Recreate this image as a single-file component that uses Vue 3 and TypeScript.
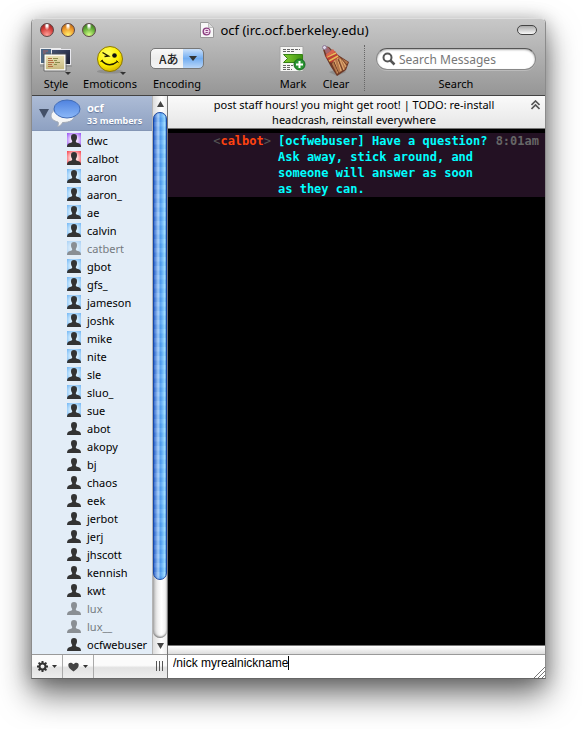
<script setup lang="ts">
import { ref } from 'vue'

type Badge = 'owner' | 'admin' | 'voice' | 'none'
interface Member {
  name: string
  badge: Badge
  away?: boolean
}

const make = (names: string, badge: Badge): Member[] =>
  names.split(' ').map((name) => ({ name, badge, away: ['catbert', 'lux', 'lux__'].includes(name) }))

const members: Member[] = [
  ...make('dwc', 'owner'),
  ...make('calbot', 'admin'),
  ...make('aaron aaron_ ae calvin catbert gbot gfs_ jameson joshk mike nite sle sluo_ sue', 'voice'),
  ...make('abot akopy bj chaos eek jerbot jerj jhscott kennish kwt lux lux__ ocfwebuser', 'none'),
]

const draft = ref('/nick myrealnickname')
const search = ref('')
const encoding = ref('ja')
const teeth = [0, 45, 90, 135, 180, 225, 270, 315]
</script>

<template>
  <div class="desktop">
    <div class="window">
      <header class="chrome">
        <div class="titlebar">
          <div class="lights">
            <button class="light red" aria-label="Close"></button>
            <button class="light amber" aria-label="Minimize"></button>
            <button class="light green" aria-label="Zoom"></button>
          </div>
          <h1 class="title">
            <svg width="14" height="16" viewBox="0 0 14 16">
              <path d="M.5.5h8l5 5v10H.5z" fill="#f7f7f7" stroke="#999" />
              <path d="M8.500.5v5h5z" fill="#ddd" stroke="#aaa" stroke-width=".7" />
              <circle cx="6.500" cy="9.500" r="4" fill="#8b3f80" />
              <path d="M4 9.500h5c0-3-4.500-3-4.500 0 0 2.500 3 2.500 4.500 1" fill="none" stroke="#f4dff0" stroke-width="1.200" />
            </svg>
            <span>ocf (irc.ocf.berkeley.edu)</span>
          </h1>
          <button class="pill" aria-label="Toggle toolbar"></button>
        </div>
        <div class="toolbar">
          <button class="tool style">
            <svg width="34" height="30" viewBox="0 0 34 30">
              <defs>
                <linearGradient id="navy" x2="1" y2="1"><stop stop-color="#465374" /><stop offset="1" stop-color="#191b2d" /></linearGradient>
                <linearGradient id="sand" x2="0" y2="1"><stop stop-color="#ede3b9" /><stop offset="1" stop-color="#c6b77c" /></linearGradient>
              </defs>
              <rect x="1.500" y="3.500" width="20" height="15" fill="#4e6886" stroke="#eee" />
              <path d="M4 6h5M4 8h3" stroke="#a55e60" />
              <rect x="12.500" y="4.500" width="19" height="15" fill="url(#navy)" stroke="#e8e8ee" />
              <path d="M1 21h32" stroke="#777" opacity=".6" />
              <rect x="6" y="10" width="20" height="15" fill="url(#sand)" stroke="#fff" stroke-width="1.500" />
              <path d="M5 9h22v17H5z" fill="none" stroke="#555" stroke-width=".7" />
              <path d="M9 13.500h4M9 15.500h5M9 17.500h6M9 19.500h4M9 21.500h5" stroke="#b46e44" />
              <path d="M14 13.500h5M15 15.500h3M16 17.500h5M15 19.500h3" stroke="#8b8d4d" />
              <path d="M26 27h6l-3 3z" fill="#333" />
            </svg>
            <span>Style</span>
          </button>
          <button class="tool emoticons">
            <svg width="34" height="30" viewBox="0 0 34 30">
              <defs>
                <radialGradient id="smile" cx=".4" cy=".3" r=".75"><stop stop-color="#ffff65" /><stop offset=".6" stop-color="#fff000" /><stop offset="1" stop-color="#d2ad00" /></radialGradient>
              </defs>
              <ellipse cx="17" cy="26.500" rx="13" ry="2" fill="#666" opacity=".35" />
              <circle cx="17" cy="14" r="12.500" fill="url(#smile)" stroke="#8b7700" />
              <path d="M9.500 7.500l6 3.500-4 .5" fill="none" stroke="#221b00" stroke-width="1.400" />
              <circle cx="21.500" cy="10.500" r="2.300" fill="#111" />
              <path d="M8.500 15.500q7.500 8 16 1" fill="none" stroke="#221b00" stroke-width="1.600" />
              <path d="M7.500 16.500l2.500-1.500M23.500 15.500l2 2" stroke="#221b00" />
              <path d="M27 27h6l-3 3z" fill="#333" />
            </svg>
            <span>Emoticons</span>
          </button>
          <div class="tool encoding">
            <div class="select-wrap">
              <select id="encoding" v-model="encoding">
                <option value="ja">Aあ</option>
              </select>
              <svg class="select-arrow" width="8" height="5" viewBox="0 0 8 5"><path d="M0 0h8L4 5z" fill="#333" /></svg>
            </div>
            <label for="encoding">Encoding</label>
          </div>
          <button class="tool mark">
            <svg width="28" height="30" viewBox="0 0 28 30">
              <defs>
                <linearGradient id="leaf" x2="1"><stop stop-color="#83cf31" /><stop offset="1" stop-color="#3d9210" /></linearGradient>
              </defs>
              <path d="M1 1.500h23v25H1z" fill="#f6f6f4" stroke="#a5a5a5" />
              <path d="M4 4.500h17M4 6.500h12M4 20.500h10M4 22.500h8M4 24.500h9" stroke="#666" stroke-dasharray="3 1" />
              <path d="M4.500 9.500h19v8h-19l4-4z" fill="url(#leaf)" stroke="#348114" />
              <circle cx="20.500" cy="19.500" r="5.500" fill="#299633" stroke="#17651f" />
              <path d="M20.500 16v7M17 19.500h7" stroke="#fff" stroke-width="2" />
            </svg>
            <span>Mark</span>
          </button>
          <button class="tool clear">
            <svg width="32" height="32" viewBox="0 0 32 32">
              <path d="M9 27l8 4 9-4-5-4z" fill="#555" opacity=".3" />
              <path d="M3 4.500L5 1l4 1 4 4 5 4 11 7-3 8-9 6-6-9-6-11z" fill="#6d3826" />
              <path d="M16 10l12 7-3 7-8 5-5-10z" fill="#b5774a" />
              <path d="M14 13l4 15M17 12l4 14M20 14l4 11M22 15l4 7" stroke="#e3ae76" />
              <path d="M14 17l5 12M18 14l5 12M20 12l7 8" stroke="#713d27" />
              <path d="M5 11l10-5 4 6-8 6z" fill="#bd4034" />
              <path d="M7 12l9-4M9 16l9-5" stroke="#e5be59" stroke-width="1.500" />
              <path d="M6 9l7-5 2 3-8 5z" fill="#d9644c" />
              <path d="M4 3l4-1 3 4-5 3z" fill="#a46770" />
              <circle cx="4.500" cy="2.500" r="2" fill="#ded9eb" stroke="#8d7893" />
            </svg>
            <span>Clear</span>
          </button>
          <span class="divider"></span>
          <div class="tool search">
            <div class="field">
              <svg width="14" height="14" viewBox="0 0 14 14"><circle cx="5.500" cy="5.500" r="4" fill="none" stroke="#555" stroke-width="2" /><path d="M8.500 8.500l4 4" stroke="#555" stroke-width="2.500" /></svg>
              <input id="search" v-model="search" type="text" placeholder="Search Messages" />
            </div>
            <label for="search">Search</label>
          </div>
        </div>
      </header>

      <div class="body">
        <aside class="sidebar">
          <div class="roster">
            <div class="list">
              <button class="room">
                <svg class="disclosure" width="10" height="9" viewBox="0 0 10 9"><path d="M0 0h10L5 9z" fill="#435068" /></svg>
                <svg width="31" height="28" viewBox="0 0 31 28">
                  <defs>
                    <linearGradient id="bubble" x2="0" y2="1"><stop stop-color="#4f82df" /><stop offset="1" stop-color="#8bb8f8" /></linearGradient>
                  </defs>
                  <path d="M11 10C4 10 1 13.500 1 17c0 3 3 5 7 6 1 2 0 3-.5 4.500 3-.5 4-2 5-4C20 23.500 24 21 24 17s-5-7-13-7z" fill="#f4f5f6" stroke="#a1a8b4" />
                  <ellipse cx="17" cy="10" rx="13" ry="9" fill="url(#bubble)" stroke="#416cb7" />
                </svg>
                <span class="room-text"><b>ocf</b><small>33 members</small></span>
              </button>
              <ul>
                <li v-for="m in members" :key="m.name" :class="{ away: m.away }">
                  <span class="avatar" :class="m.badge">
                    <svg width="14" height="14" viewBox="0 0 14 14">
                      <path d="M7 1c2 0 3 1.200 3 3.200C10 6 9.300 7 8.800 8c0 1 .4 1.600 2.200 2 2 .5 3 1.500 3 4H0c0-2.500 1-3.500 3-4 1.800-.4 2.200-1 2.200-2C4.700 7 4 6 4 4.200 4 2.200 5 1 7 1z" fill="#333" />
                    </svg>
                  </span>
                  <span>{{ m.name }}</span>
                </li>
              </ul>
            </div>
            <div class="scrollbar">
              <button aria-label="Scroll up"><svg width="7" height="6" viewBox="0 0 7 6"><path d="M0 6h7L3.500 0z" fill="#444" /></svg></button>
              <div class="track"><div class="thumb"></div></div>
              <button aria-label="Scroll down"><svg width="7" height="6" viewBox="0 0 7 6"><path d="M0 0h7L3.500 6z" fill="#444" /></svg></button>
            </div>
          </div>
          <div class="footer">
            <button aria-label="Actions">
              <svg width="11" height="11" viewBox="0 0 11 11">
                <circle cx="5.500" cy="5.500" r="3" fill="none" stroke="#333" stroke-width="2" />
                <path v-for="t in teeth" :key="t" d="M5.500 0v2" stroke="#333" stroke-width="2" :transform="`rotate(${t} 5.500 5.500)`" />
              </svg>
              <svg width="5" height="3" viewBox="0 0 5 3"><path d="M0 0h5L2.500 3z" fill="#333" /></svg>
            </button>
            <button aria-label="Favorites">
              <svg width="11" height="10" viewBox="0 0 11 10"><path d="M5.500 9.500C2 7 .3 5.500.3 3 .3 0 4 0 5.500 2.200 7 0 10.700 0 10.700 3c0 2.500-1.700 4-5.200 6.500z" fill="#444" /></svg>
              <svg width="5" height="3" viewBox="0 0 5 3"><path d="M0 0h5L2.500 3z" fill="#333" /></svg>
            </button>
            <span class="grip"></span>
          </div>
        </aside>

        <main class="chat">
          <div class="topic">
            <p>post staff hours! you might get root! | TODO: re-install headcrash, reinstall everywhere</p>
            <button aria-label="Collapse topic"><svg width="9" height="10" viewBox="0 0 9 10"><path d="M.5 5l4-4 4 4M.5 9l4-4 4 4" fill="none" stroke="#555" stroke-width="1.600" /></svg></button>
          </div>
          <div class="log">
            <div class="message">
              <span class="nick">&lt;<b>calbot</b>&gt;</span>
              <p>[ocfwebuser] Have a question? Ask away, stick around, and someone will answer as soon as they can.</p>
              <time>8:01am</time>
            </div>
          </div>
          <div class="splitter"></div>
          <div class="compose">
            <input v-model="draft" type="text" aria-label="Message" /><span class="caret"></span>
            <svg class="resize" width="12" height="12" viewBox="0 0 12 12"><path d="M1 12L12 1M5 12l7-7M9 12l3-3" stroke="#777" /></svg>
          </div>
        </main>
      </div>
    </div>
  </div>
</template>

<style>
body {
  margin: 0;
  background: #fff;
}
</style>

<style scoped>
* {
  box-sizing: border-box;
}
.desktop {
  padding: 18px 37px 50px 31px;
  overflow: hidden;
  font-family: "Noto Sans", "Open Sans", "Noto Sans CJK JP", sans-serif;
  font-size: 11px;
  color: #000;
}
button {
  font: inherit;
  color: inherit;
  padding: 0;
  border: 0;
  background: none;
}
svg {
  display: block;
  flex: none;
}
p,
h1,
ul {
  margin: 0;
  padding: 0;
}
.window {
  border: 1px solid #8b8b8b;
  border-top-color: #ddd;
  border-bottom-color: #666;
  border-radius: 5px 5px 0 0;
  box-shadow: 0 16px 32px rgba(0, 0, 0, 0.55), 0 2px 18px rgba(0, 0, 0, 0.25);
}
.chrome {
  height: 77px;
  background: linear-gradient(#c8c8c8, #969696);
  border-bottom: 1px solid #434343;
  border-radius: 4px 4px 0 0;
}
.titlebar {
  display: grid;
  grid-template-columns: 56px 1fr 64px;
  align-items: center;
  height: 22px;
  padding: 0 8px;
}
.lights {
  display: flex;
  gap: 7px;
}
.light {
  flex: none;
  width: 14px;
  height: 14px;
  border: 1px solid #5c4646;
  border-radius: 50%;
}
.red {
  background: radial-gradient(ellipse at 50% 12%, #fff 8%, transparent 32%), radial-gradient(circle at 50% 90%, #ff9f98, #d33d39 55%, #851b1b);
}
.amber {
  background: radial-gradient(ellipse at 50% 12%, #fff 8%, transparent 32%), radial-gradient(circle at 50% 90%, #fff06e, #ee982b 55%, #a2570c);
}
.green {
  background: radial-gradient(ellipse at 50% 12%, #fff 8%, transparent 32%), radial-gradient(circle at 50% 90%, #d5ff88, #63ad37 55%, #2e611a);
}
.title {
  display: flex;
  justify-content: center;
  align-items: center;
  gap: 6px;
  font-size: 13px;
  font-weight: 400;
  white-space: nowrap;
}
.pill {
  justify-self: end;
  width: 20px;
  height: 10px;
  border: 1px solid #444;
  border-radius: 5px;
  background: linear-gradient(#aaa, #f8f8f8);
}
.toolbar {
  display: flex;
  padding: 4px 9px 0 6px;
}
.tool {
  display: flex;
  flex-direction: column;
  align-items: center;
  justify-content: space-between;
  height: 46px;
  line-height: 14px;
  flex: none;
}
.style {
  width: 36px;
}
.emoticons {
  width: 56px;
  margin-left: 8px;
}
.encoding {
  width: 56px;
  margin-left: 11px;
}
.mark {
  width: 28px;
  margin-left: auto;
}
.clear {
  width: 32px;
  margin-left: 13px;
}
.select-wrap {
  position: relative;
}
select {
  appearance: none;
  display: block;
  width: 54px;
  height: 21px;
  margin-top: 3px;
  padding: 0 0 0 8px;
  border: 1px solid #777;
  border-radius: 5px;
  background: linear-gradient(rgba(255, 255, 255, 0.7), rgba(255, 255, 255, 0.2) 50%, rgba(255, 255, 255, 0.6)), linear-gradient(90deg, #e8e8e8 32px, #5099ee 32px);
  color: #222;
  font: 500 12px "Noto Sans CJK JP", sans-serif;
}
.select-arrow {
  position: absolute;
  right: 7px;
  top: 11px;
  pointer-events: none;
}
.divider {
  margin: 0 11px 0 12px;
  border-left: 1px dotted #666;
}
.search {
  flex: 0 1 160px;
  min-width: 0;
}
.field {
  display: flex;
  align-items: center;
  gap: 3px;
  width: 100%;
  height: 22px;
  margin-top: 3px;
  padding: 0 5px;
  background: #fff;
  border: 1px solid #888;
  border-top-color: #555;
  border-radius: 11px;
  box-shadow: inset 0 1px 2px #aaa, 0 1px 0 #bbb;
}
.field input {
  flex: 1;
  min-width: 0;
  padding: 0;
  border: 0;
  outline: 0;
  background: none;
  font: 12px "Noto Sans", sans-serif;
}
.field input::placeholder {
  color: #777;
}
.body {
  display: grid;
  grid-template-columns: 136px 1fr;
}
.sidebar {
  display: flex;
  flex-direction: column;
  border-right: 1px solid #777;
}
.roster {
  display: flex;
  flex: 1;
}
.list {
  flex: 1;
  min-width: 0;
  background: #e3edf7;
}
.room {
  display: flex;
  align-items: center;
  width: 100%;
  height: 35px;
  padding-left: 7px;
  background: linear-gradient(#adbcd6, #8ea1c2);
  border-bottom: 1px solid #8496b5;
  color: #fff;
  text-align: left;
  text-shadow: 0 1px 1px #65779b;
  white-space: nowrap;
}
.room-text {
  display: flex;
  flex-direction: column;
  padding-left: 6px;
}
.room-text b {
  line-height: 15px;
}
.room-text small {
  font-size: 9px;
  font-weight: 700;
  line-height: 12px;
}
.disclosure {
  margin-right: 1px;
}
ul {
  padding-bottom: 1px;
  list-style: none;
}
li {
  display: flex;
  align-items: center;
  gap: 6px;
  height: 18px;
  padding-left: 35px;
  white-space: nowrap;
}
.away {
  opacity: 0.5;
}
.avatar.owner {
  background: radial-gradient(circle, #f0dcff 35%, #934df4);
}
.avatar.admin {
  background: radial-gradient(circle, #ffdada 35%, #f83e49);
}
.avatar.voice {
  background: radial-gradient(circle, #d3edff 35%, #71b6f4);
}
.scrollbar {
  display: flex;
  flex-direction: column;
  width: 15px;
  border-left: 1px solid #b5b5b5;
  background: linear-gradient(90deg, #ddd, #fff 60%, #eee);
}
.scrollbar button {
  display: grid;
  place-items: center;
  height: 16px;
}
.track {
  flex: 1;
  border-radius: 7px;
  box-shadow: inset 0 -1px 2px #777, inset 2px 0 3px #bbb;
}
.thumb {
  height: 89%;
  border: 1px solid #1848a6;
  border-radius: 7px;
  background: repeating-linear-gradient(rgba(255, 255, 255, 0.08) 0 4px, rgba(0, 60, 180, 0.04) 5px 9px), linear-gradient(90deg, #2b64cc, #a5cef8 35%, #4e9cf0 55%, #9adcff 90%, #4d91dc);
}
.footer {
  display: flex;
  height: 24px;
  border-top: 1px solid #999;
  background: linear-gradient(#fbfbfb 45%, #e2e2e2 55%, #ededed);
}
.footer button {
  display: flex;
  align-items: center;
  justify-content: center;
  gap: 4px;
  width: 31px;
  border-right: 1px solid #aaa;
}
.grip {
  width: 7px;
  height: 10px;
  margin: 6px 4px 0 auto;
  background: repeating-linear-gradient(90deg, #555 0 1px, transparent 1px 3px);
}
.chat {
  display: flex;
  flex-direction: column;
  min-width: 0;
}
.topic {
  display: flex;
  align-items: flex-start;
  height: 33px;
  padding: 1px 5px 0 9px;
  background: linear-gradient(#fafafa, #e6e6e6);
  border-bottom: 1px solid #777;
  line-height: 15px;
  text-align: center;
}
.topic p {
  flex: 1;
  padding: 0 20px;
}
.topic button {
  margin-top: 3px;
}
.log {
  flex: 1;
  padding-top: 4px;
  background: #000;
  font-family: "DejaVu Sans Mono", monospace;
  font-size: 12px;
  line-height: 16px;
}
.message {
  display: grid;
  grid-template-columns: 103px 1fr auto;
  column-gap: 7px;
  padding-right: 6px;
  background: #231123;
}
.nick {
  text-align: right;
  color: #555;
}
.nick b {
  color: #ff4310;
}
.message p {
  color: #00ffff;
  font-weight: 700;
}
time {
  color: #666;
  font-weight: 700;
}
.splitter {
  height: 9px;
  border-top: 1px solid #777;
  background: linear-gradient(#fff, #ddd);
}
.compose {
  display: flex;
  align-items: flex-start;
  height: 24px;
  padding: 1px 0 0 5px;
  border-top: 1px solid #999;
  background: #fff;
}
.compose input {
  field-sizing: content;
  height: 14px;
  padding: 0;
  border: 0;
  outline: 0;
  caret-color: transparent;
  font: 12px/14px "Liberation Sans", Arial, sans-serif;
}
.caret {
  width: 1px;
  height: 14px;
  background: #000;
}
.resize {
  margin-left: auto;
  align-self: flex-end;
}
</style>
